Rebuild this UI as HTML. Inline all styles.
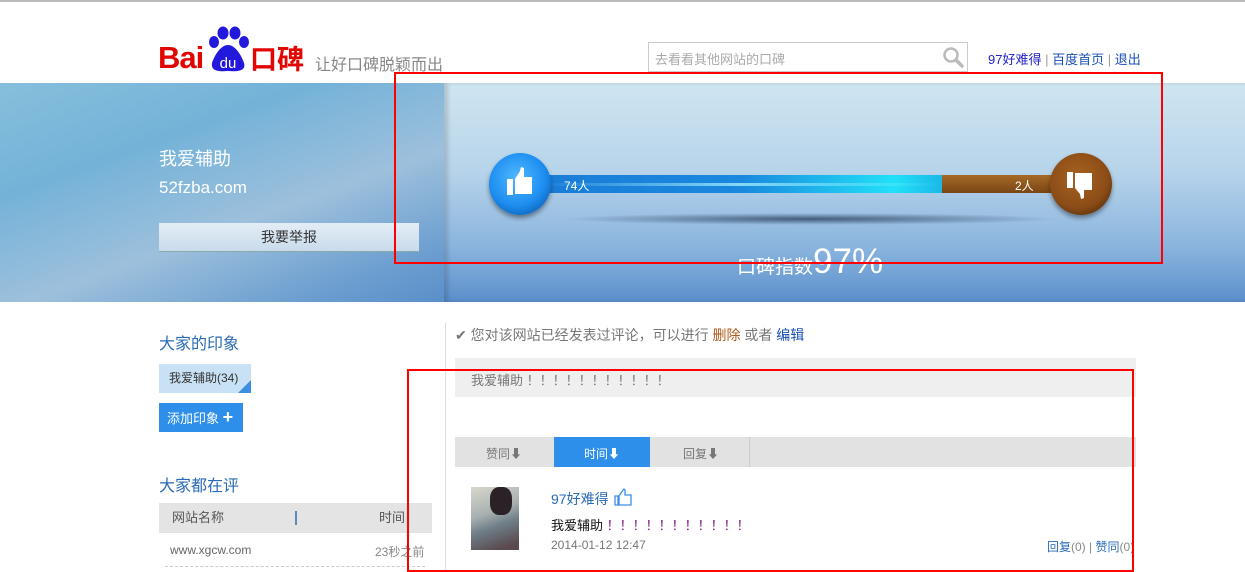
<!DOCTYPE html>
<html><head><meta charset="utf-8">
<style>
*{margin:0;padding:0;box-sizing:border-box}
body{width:1245px;height:572px;overflow:hidden;background:#fff;position:relative;font-family:"Liberation Sans","Noto Sans CJK SC",sans-serif;font-size:13px;color:#333}
.a{position:absolute}
a{color:#1a4fb5;text-decoration:none}
</style></head><body>
<div class="a" style="left:0;top:0;width:1245px;height:2px;background:#bbb"></div>
<!-- logo -->
<div class="a" style="left:158px;top:40px;font:bold 31px 'Liberation Sans',sans-serif;color:#e10602;letter-spacing:-1px">Bai</div>
<svg class="a" style="left:204px;top:25px" width="48" height="48" viewBox="0 0 48 48">
<ellipse cx="10" cy="17" rx="5" ry="6" fill="#2319dc"/><ellipse cx="19" cy="8" rx="5.5" ry="6.5" fill="#2319dc"/><ellipse cx="31" cy="8" rx="5.5" ry="6.5" fill="#2319dc"/><ellipse cx="40" cy="17" rx="5" ry="6" fill="#2319dc"/>
<path d="M24 20 C16 20 10 32 8 38 C7 45 12 47 24 46 C36 47 42 45 40 38 C38 32 32 20 24 20Z" fill="#2319dc"/>
<text x="24" y="43" font-family="Liberation Sans" font-size="15" fill="#fff" text-anchor="middle">du</text></svg>
<div class="a" style="left:250px;top:41px;font:bold 27px 'Noto Sans CJK SC',sans-serif;color:#e10602;line-height:34px">口碑</div>
<div class="a" style="left:315px;top:51px;font-size:16px;color:#888">让好口碑脱颖而出</div>
<div class="a" style="left:648px;top:42px;width:320px;height:30px;border:1px solid #ccc"></div>
<div class="a" style="left:655px;top:49px;font-size:13px;color:#aaa">去看看其他网站的口碑</div>
<svg class="a" style="left:942px;top:46px" width="22" height="22"><circle cx="9" cy="9" r="6.5" stroke="#bbb" stroke-width="2.5" fill="none"/><line x1="14" y1="14" x2="20" y2="20" stroke="#bbb" stroke-width="3.5" stroke-linecap="round"/></svg>
<div class="a" style="left:988px;top:49px;font-size:13px;color:#999"><a style="color:#2222cc">97好难得</a> | <a>百度首页</a> | <a>退出</a></div>
<!-- banner -->
<div class="a" style="left:0;top:83px;width:444px;height:219px;background:linear-gradient(160deg,#86bfdc 0%,#74b2d8 30%,#9dc0dc 60%,#6d9fd0 85%,#5a8fc9 100%)"></div>
<div class="a" style="left:444px;top:83px;width:801px;height:219px;background:linear-gradient(180deg,#cfe6f1 0%,#b7d4ea 40%,#8ab4de 75%,#5b8fcb 100%);box-shadow:inset 4px 0 4px rgba(0,0,0,.15)"></div>
<div class="a" style="left:159px;top:145px;font-size:18px;color:#fff">我爱辅助</div>
<div class="a" style="left:159px;top:178px;font-size:17px;color:#fff">52fzba.com</div>
<div class="a" style="left:159px;top:223px;width:260px;height:29px;background:linear-gradient(#e3edf6,#c9dbeb);border-bottom:1px solid #8aa;text-align:center;line-height:29px;font-size:14px;color:#333">我要举报</div>
<!-- bar -->
<div class="a" style="left:560px;top:213px;width:500px;height:12px;border-radius:50%;background:radial-gradient(ellipse,rgba(30,50,80,.7),rgba(30,50,80,0) 70%)"></div>
<div class="a" style="left:540px;top:175px;width:402px;height:18px;background:linear-gradient(90deg,#1a7dd8 0%,#1a88de 50%,#22e0f8 88%,#1ab8e8 100%)"></div>
<div class="a" style="left:540px;top:183px;width:402px;height:3px;background:linear-gradient(90deg,rgba(255,255,255,0),rgba(180,250,255,.7) 50%,rgba(255,255,255,0))"></div>
<div class="a" style="left:942px;top:175px;width:118px;height:18px;background:linear-gradient(#a66a26,#7a4515)"></div>
<div class="a" style="left:564px;top:177px;font-size:12px;color:#fff">74人</div>
<div class="a" style="left:1015px;top:177px;font-size:12px;color:#fff">2人</div>
<div class="a" style="left:489px;top:153px;width:62px;height:62px;border-radius:50%;background:radial-gradient(circle at 45% 40%,#52b8ff,#1d8ef0 55%,#0b5fb3 85%,#0a3a6e);box-shadow:0 3px 5px rgba(0,0,0,.4)"></div>
<svg class="a" style="left:506px;top:167px" width="28" height="30" viewBox="0 0 28 30"><rect x="1" y="12" width="6" height="16" fill="#fff"/><path d="M9 12 L14 4 L15 0 L18 1 L18 10 L26 10 L26 27 L9 27Z" fill="#fff"/></svg>
<div class="a" style="left:1050px;top:153px;width:62px;height:62px;border-radius:50%;background:radial-gradient(circle at 45% 40%,#a8621f,#8a4c17 60%,#4a250a 90%);box-shadow:0 3px 5px rgba(0,0,0,.4)"></div>
<svg class="a" style="left:1066px;top:170px" width="28" height="30" viewBox="0 0 28 30"><rect x="1" y="2" width="6" height="16" fill="#fff"/><path d="M9 18 L14 24 L15 29 L18 28 L18 20 L26 20 L26 3 L9 3Z" fill="#fff"/></svg>
<div class="a" style="left:737px;top:242px;color:#fff;white-space:nowrap"><span style="font-size:19px">口碑指数</span><span style="font-size:35px">97%</span></div>
<!-- left column -->
<div class="a" style="left:159px;top:330px;font-size:16px;color:#2a6bb5">大家的印象</div>
<div class="a" style="left:159px;top:364px;width:92px;height:29px;background:#c8e1f5;line-height:29px;padding-left:10px;font-size:12px;color:#333">我爱辅助(34)</div>
<div class="a" style="left:238px;top:380px;width:0;height:0;border-left:13px solid transparent;border-bottom:13px solid #3c8fe0"></div>
<div class="a" style="left:159px;top:403px;width:84px;height:29px;background:#2e8fea;color:#fff;line-height:29px;padding-left:8px;font-size:13px">添加印象 <b style="font-size:18px">+</b></div>
<div class="a" style="left:159px;top:472px;font-size:16px;color:#2a6bb5">大家都在评</div>
<div class="a" style="left:159px;top:503px;width:273px;height:30px;background:#e4e4e4;font-size:13px;color:#555;line-height:30px"><span style="margin-left:13px">网站名称</span><span class="a" style="left:136px;top:8px;width:2px;height:14px;background:#5a8bbf"></span><span class="a" style="left:220px">时间</span></div>
<div class="a" style="left:170px;top:543px;font-size:12px;color:#666">www.xgcw.com</div>
<div class="a" style="left:375px;top:543px;font-size:12px;color:#888">23秒之前</div>
<div class="a" style="left:165px;top:566px;width:260px;border-top:1px dashed #ccc"></div>
<div class="a" style="left:445px;top:323px;width:1px;height:249px;background:#ddd"></div>
<!-- right column -->
<div class="a" style="left:455px;top:325px;font-size:14px;color:#777">✔ 您对该网站已经发表过评论，可以进行 <span style="color:#b05a1a">删除</span> 或者 <span style="color:#1a4fb5">编辑</span></div>
<div class="a" style="left:455px;top:358px;width:681px;height:39px;background:#efefef"></div>
<div class="a" style="left:471px;top:370px;font-size:13px;color:#777">我爱辅助 ！！！！！！！！！！！</div>
<div class="a" style="left:455px;top:437px;width:681px;height:30px;background:#e2e2e2"></div>
<div class="a" style="left:554px;top:437px;width:96px;height:30px;background:#2e8fea"></div>
<div class="a" style="left:749px;top:437px;width:1px;height:30px;background:#ccc"></div>
<div class="a" style="left:486px;top:445px;font-size:12px;color:#777">赞同⬇</div>
<div class="a" style="left:584px;top:445px;font-size:12px;color:#fff">时间⬇</div>
<div class="a" style="left:683px;top:445px;font-size:12px;color:#777">回复⬇</div>
<div class="a" style="left:471px;top:487px;width:48px;height:63px;background:linear-gradient(160deg,#d8d8cc,#a8b0b0 40%,#6f7f88 60%,#5a4a50 90%)"></div>
<div class="a" style="left:490px;top:487px;width:22px;height:28px;border-radius:40%;background:#2a2226"></div>
<div class="a" style="left:551px;top:489px;font-size:14px;color:#2a6bb5">97好难得</div>
<svg class="a" style="left:614px;top:488px" width="18" height="18" viewBox="0 0 18 18"><path d="M1 8h3v9H1zM5 8l4-6 1-1 1 1v5h6v10H5z" fill="none" stroke="#3a8ee6" stroke-width="1.3"/></svg>
<div class="a" style="left:551px;top:515px;font-size:13px;color:#111">我爱辅助 <span style="color:#7a1a7a">！！！！！！！！！！！</span></div>
<div class="a" style="left:551px;top:538px;font-size:12px;color:#777">2014-01-12 12:47</div>
<div class="a" style="left:1047px;top:538px;font-size:12px;color:#888;white-space:nowrap"><span style="color:#2a6bb5">回复</span>(0) | <span style="color:#2a6bb5">赞同</span>(0)</div>
<!-- red boxes -->
<div class="a" style="left:394px;top:72px;width:769px;height:192px;border:2px solid #f00"></div>
<div class="a" style="left:407px;top:369px;width:727px;height:203px;border:2px solid #f00"></div>
</body></html>
